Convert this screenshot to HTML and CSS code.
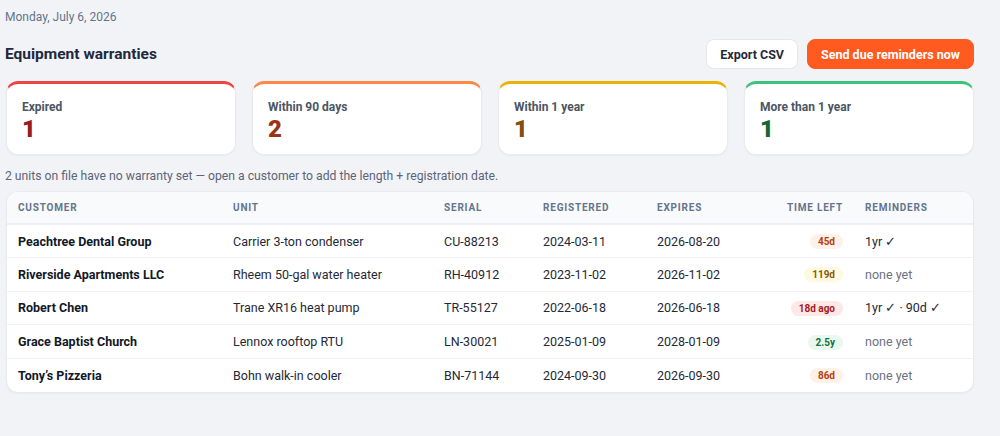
FILE: index.html
```html
<!DOCTYPE html>
<html lang="en">
<head>
  <meta charset="UTF-8">
  <title>Equipment warranties</title>
  <meta name="viewport" content="width=device-width, initial-scale=1.0">
  <link rel="stylesheet" href="styles.css">
</head>
<body>
  <div class="page">
    <div class="date">Monday, July 6, 2026</div>

    <div class="header">
      <h1>Equipment warranties</h1>
      <div class="actions">
        <button class="btn">Export CSV</button>
        <button class="btn btn-primary">Send due reminders now</button>
      </div>
    </div>

    <div class="cards">
      <div class="card card-red">
        <div class="card-label">Expired</div>
        <div class="card-value">1</div>
      </div>
      <div class="card card-orange">
        <div class="card-label">Within 90 days</div>
        <div class="card-value">2</div>
      </div>
      <div class="card card-yellow">
        <div class="card-label">Within 1 year</div>
        <div class="card-value">1</div>
      </div>
      <div class="card card-green">
        <div class="card-label">More than 1 year</div>
        <div class="card-value">1</div>
      </div>
    </div>

    <p class="note">2 units on file have no warranty set — open a customer to add the length + registration date.</p>

    <div class="table-wrap">
      <table>
        <colgroup>
          <col style="width:215px">
          <col style="width:211px">
          <col style="width:99px">
          <col style="width:114px">
          <col style="width:110px">
          <col style="width:98px">
          <col>
        </colgroup>
        <thead>
          <tr>
            <th>Customer</th>
            <th>Unit</th>
            <th>Serial</th>
            <th>Registered</th>
            <th>Expires</th>
            <th class="right">Time left</th>
            <th>Reminders</th>
          </tr>
        </thead>
        <tbody>
          <tr>
            <td class="name">Peachtree Dental Group</td>
            <td>Carrier 3-ton condenser</td>
            <td>CU-88213</td>
            <td>2024-03-11</td>
            <td>2026-08-20</td>
            <td class="right"><span class="pill pill-orange">45d</span></td>
            <td>1yr ✓</td>
          </tr>
          <tr>
            <td class="name">Riverside Apartments LLC</td>
            <td>Rheem 50-gal water heater</td>
            <td>RH-40912</td>
            <td>2023-11-02</td>
            <td>2026-11-02</td>
            <td class="right"><span class="pill pill-yellow">119d</span></td>
            <td class="muted">none yet</td>
          </tr>
          <tr>
            <td class="name">Robert Chen</td>
            <td>Trane XR16 heat pump</td>
            <td>TR-55127</td>
            <td>2022-06-18</td>
            <td>2026-06-18</td>
            <td class="right"><span class="pill pill-red">18d ago</span></td>
            <td>1yr ✓ · 90d ✓</td>
          </tr>
          <tr>
            <td class="name">Grace Baptist Church</td>
            <td>Lennox rooftop RTU</td>
            <td>LN-30021</td>
            <td>2025-01-09</td>
            <td>2028-01-09</td>
            <td class="right"><span class="pill pill-green">2.5y</span></td>
            <td class="muted">none yet</td>
          </tr>
          <tr>
            <td class="name">Tony’s Pizzeria</td>
            <td>Bohn walk-in cooler</td>
            <td>BN-71144</td>
            <td>2024-09-30</td>
            <td>2026-09-30</td>
            <td class="right"><span class="pill pill-orange">86d</span></td>
            <td class="muted">none yet</td>
          </tr>
        </tbody>
      </table>
    </div>
  </div>
</body>
</html>
```

FILE: styles.css
```css
* {
  box-sizing: border-box;
  margin: 0;
  padding: 0;
}

body {
  font-family: Roboto, "Noto Sans", Arial, sans-serif;
  background: #f2f3f7;
  color: #1f2937;
  height: 100vh;
  overflow: hidden;
}

.page {
  width: 968px;
  margin-left: 6px;
  padding-top: 10px;
}

.date {
  font-size: 12px;
  color: #64748b;
  line-height: 15px;
  margin-left: -1px;
}

.header {
  display: flex;
  align-items: center;
  justify-content: space-between;
  margin-top: 14px;
  height: 30px;
}

.header h1 {
  font-size: 15.5px;
  font-weight: 700;
  color: #1e293b;
  margin-left: -1px;
}

.actions {
  display: flex;
  gap: 9px;
}

.btn {
  font-family: inherit;
  font-size: 12.5px;
  font-weight: 700;
  height: 30px;
  padding: 0 13px;
  border-radius: 8px;
  border: 1px solid #e5e7eb;
  background: white;
  color: #1f2937;
  cursor: pointer;
}

.btn-primary {
  background: #ff5a1f;
  border-color: #ff5a1f;
  color: white;
}

.cards {
  display: grid;
  grid-template-columns: repeat(4, 1fr);
  gap: 16px;
  margin-top: 12px;
}

.card {
  background: white;
  border: 1px solid #e8eaef;
  border-top: 3px solid;
  border-radius: 12px;
  padding: 16px 15px 11px;
  height: 74px;
  box-shadow: 0 1px 2px rgba(15, 23, 42, 0.04);
}

.card-red { border-top-color: #ef4444; }
.card-orange { border-top-color: #fb8a4a; }
.card-yellow { border-top-color: #eab308; }
.card-green { border-top-color: #3cc47c; }

.card-label {
  font-size: 12px;
  font-weight: 700;
  color: #4b5563;
  line-height: 15px;
}

.card-value {
  font-size: 24px;
  font-weight: 900;
  line-height: 28px;
}

.card-red .card-value { color: #991b1b; }
.card-orange .card-value { color: #9a3412; }
.card-yellow .card-value { color: #854d0e; }
.card-green .card-value { color: #166534; }

.note {
  font-size: 12.2px;
  color: #5b6577;
  line-height: 16px;
  margin-top: 13px;
  margin-left: -1px;
}

.table-wrap {
  margin-top: 7px;
  background: white;
  border: 1px solid #e8eaef;
  border-radius: 12px;
  overflow: hidden;
  box-shadow: 0 1px 2px rgba(15, 23, 42, 0.04);
}

table {
  width: 100%;
  border-collapse: collapse;
  table-layout: fixed;
}

th {
  background: #f8fafc;
  font-size: 10px;
  font-weight: 700;
  letter-spacing: 0.08em;
  text-transform: uppercase;
  color: #64748b;
  text-align: left;
  height: 32px;
  padding: 0 11px;
  border-bottom: 2px solid #eceff4;
}

td {
  font-size: 12.5px;
  height: 33.6px;
  padding: 0 11px;
  border-bottom: 1px solid #f1f3f6;
  white-space: nowrap;
}

tbody tr:last-child td {
  border-bottom: none;
}

.right {
  text-align: right;
}

.name {
  font-weight: 700;
  color: #111827;
}

.muted {
  color: #6b7280;
}

.pill {
  display: inline-block;
  font-size: 10px;
  font-weight: 700;
  line-height: 15px;
  padding: 0 8px;
  border-radius: 999px;
}

.pill-orange { background: #fff1e8; color: #b4400f; }
.pill-yellow { background: #fef9e0; color: #8a5a0a; }
.pill-red { background: #fde8e8; color: #a61b1b; }
.pill-green { background: #e8f8ee; color: #167040; }
```
